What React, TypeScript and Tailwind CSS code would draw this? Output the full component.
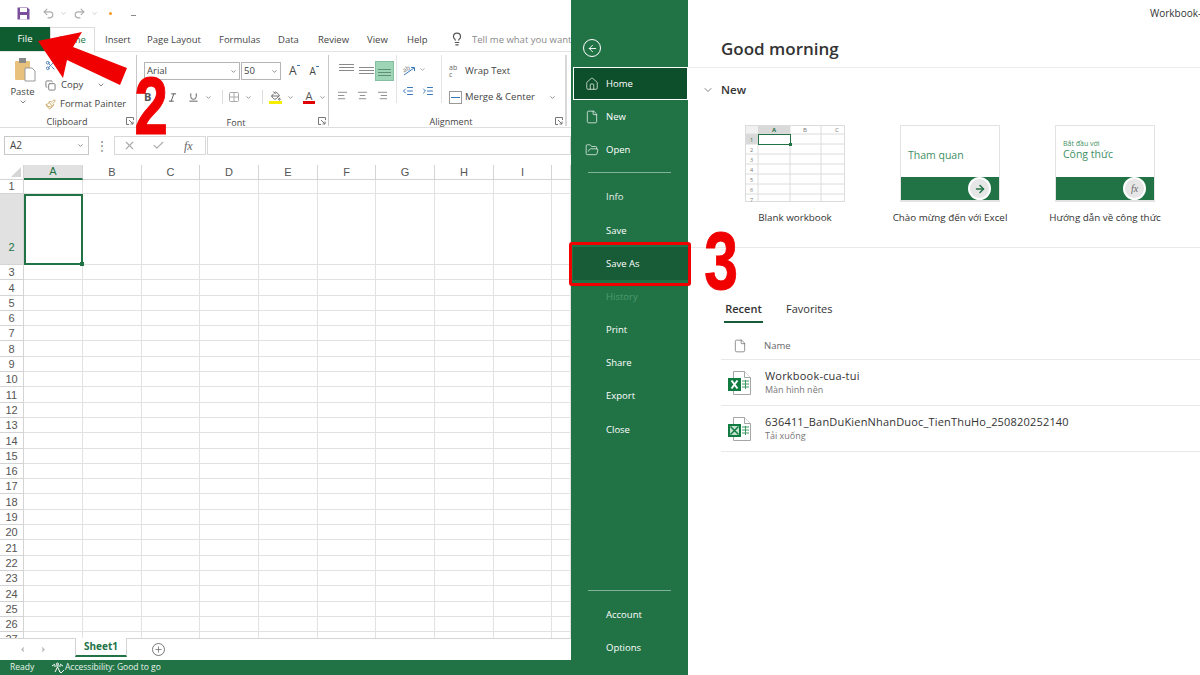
import React from 'react';
import {
  Undo2, Redo2, Lightbulb, ChevronDown, X, Check, ChevronLeft, ChevronRight, Plus, ArrowLeft,
  House, File, FolderOpen, Copy, Scissors, Paintbrush, AlignLeft, AlignCenter, AlignRight,
  IndentDecrease, IndentIncrease, Italic, Underline, Grid2x2, ArrowRight, PaintBucket,
} from 'lucide-react';

const font = "font-['Open_Sans','Noto_Sans',sans-serif]";
const cols = ['A', 'B', 'C', 'D', 'E', 'F', 'G', 'H', 'I', ''];
const rows = Array.from({length: 27}, (_, i) => i + 1);
const tabs = ['Insert', 'Page Layout', 'Formulas', 'Data', 'Review', 'View', 'Help'];
const tabGaps = ['w-[42px]', 'w-[72px]', 'w-[59px]', 'w-[40px]', 'w-[49px]', 'w-[40px]', 'w-[42px]'];

const DialogMark = () => (
  <svg width="8" height="8" viewBox="0 0 8 8" className="absolute right-[2px] bottom-[1px]" fill="none" stroke="#777" strokeWidth="1">
    <path d="M7.5 3V.5H.5v7H3M3 3l4 4M7 4.5V7H4.5" />
  </svg>
);

const Lines = ({active, offset}: {active?: boolean; offset: string}) => (
  <div className={`w-[19px] h-[20px] flex flex-col gap-[2px] px-[2px] ${offset} ${active ? 'bg-[#9fd5b7] border border-[#86bfa0]' : ''}`}>
    <div className={`h-px ${active ? 'bg-[#5f8f75]' : 'bg-[#8a8a8a]'}`} />
    <div className={`h-px ${active ? 'bg-[#5f8f75]' : 'bg-[#8a8a8a]'}`} />
    <div className={`h-px ${active ? 'bg-[#5f8f75]' : 'bg-[#8a8a8a]'}`} />
  </div>
);

const ExcelIcon = ({grid}: {grid?: boolean}) => (
  <svg width="26" height="26" viewBox="0 0 26 26" className="shrink-0">
    <path d="M6.5 1.5h11l6 6v17h-17z" fill="#fff" stroke="#a6a6a6" />
    <path d="M17.5 1.5v6h6" fill="#fff" stroke="#a6a6a6" />
    <path d="M15 11h7M15 14h7M15 17h7M18.5 10v9" stroke="#3d9a62" strokeWidth="1" />
    <rect x="1" y="8" width="13" height="13" fill="#107c41" />
    {grid ? (
      <>
        <rect x="3" y="10" width="9" height="9" fill="#c8e3d2" />
        <path d="M3.5 10.5l8 8M11.5 10.5l-8 8" stroke="#107c41" strokeWidth="1.5" />
      </>
    ) : (
      <path d="M4.5 10.5l6 8M10.5 10.5l-6 8" stroke="#fff" strokeWidth="2" />
    )}
  </svg>
);

const BlankThumb = () => (
  <svg width="100" height="77" viewBox="0 0 100 77" className="bg-white">
    <rect x="0" y="0" width="13" height="9" fill="#f1f1f1" />
    <rect x="13" y="0" width="32" height="9" fill="#d9d9d9" />
    <rect x="0" y="9" width="13" height="10" fill="#d9d9d9" />
    <path d="M.5 0v77M13 9v68M45 0v77M76 0v77M99.5 0v77M0 19h100M0 29h100M0 39h100M0 49h100M0 59h100M0 69h100M0 9h100M0 .5h100M0 76.5h100" stroke="#dcdcdc" strokeWidth="1" fill="none" />
    <rect x="13.5" y="9.5" width="32" height="10" fill="#fff" stroke="#217346" strokeWidth="1" />
    <rect x="44" y="18" width="3" height="3" fill="#217346" />
    <text x="29" y="7" fontSize="6" fontWeight="700" textAnchor="middle" fill="#217346">A</text>
    <text x="60" y="7" fontSize="6" textAnchor="middle" fill="#777">B</text>
    <text x="92" y="7" fontSize="6" textAnchor="middle" fill="#777">C</text>
    {[1, 2, 3, 4, 5, 6, 7].map((n, i) => (
      <text key={n} x="6.5" y={16.5 + i * 10} fontSize="5.5" textAnchor="middle" fill={i === 0 ? '#217346' : '#777'}>{n}</text>
    ))}
  </svg>
);

const Thumb = ({children, badge}: {children: React.ReactNode; badge: React.ReactNode}) => (
  <div className="relative w-[100px] h-[77px] border border-[#e3e3e3] border-b-2 flex flex-col bg-white">
    <div className="flex-1 px-[7px]">{children}</div>
    <div className="h-[23px] bg-[#217346]" />
    <div className="absolute right-[8px] bottom-[0px] w-[23px] h-[23px] rounded-full bg-[#e6e6e6] border-2 border-white flex items-center justify-center">{badge}</div>
  </div>
);

const Side = ({label, icon, cls}: {label: string; icon?: React.ReactNode; cls?: string}) => (
  <div className={`h-[33.2px] flex items-center text-[9.5px] pl-[33px] pt-[1px] relative shrink-0 ${cls ?? 'text-white'}`}>
    {icon && <span className="absolute left-[12px]">{icon}</span>}
    {label}
  </div>
);

export default function App() {
  return (
    <div className={`relative w-[1200px] h-[675px] overflow-hidden flex bg-white text-[#444] ${font}`}>
      {/* excel window behind the backstage */}
      <div className="w-[571px] h-full flex flex-col shrink-0">
        <div className="h-[27px] flex items-center pl-[17px] gap-[2px] shrink-0">
          <svg width="13" height="13" viewBox="0 0 13 13" className="mr-[10px]">
            <path d="M.5.5h10l2 2v10H.5z" fill="#7a4f9e" />
            <rect x="3" y="1" width="7" height="4" fill="#fff" />
            <rect x="3" y="8" width="7" height="4.5" fill="#fff" />
          </svg>
          <Undo2 size={13} className="text-[#aaa]" />
          <ChevronDown size={7} className="text-[#aaa] mr-[4px] ml-[3px]" />
          <Redo2 size={13} className="text-[#aaa]" />
          <ChevronDown size={7} className="text-[#aaa] ml-[3px]" />
          <div className="w-[3px] h-[3px] rounded-full bg-[#f59a23] ml-[9px]" />
          <div className="w-[5px] h-[5px] border-b border-[#888] ml-[17px]" />
        </div>

        <div className="h-[25px] flex items-stretch text-[9.5px] border-b border-[#e4e4e4] shrink-0">
          <div className="w-[50px] shrink-0 bg-[#0f5c30] text-white flex items-center justify-center">File</div>
          <div className="w-[45px] shrink-0 border-x border-t border-[#dcdcdc] -mb-px bg-white text-[#217346] flex items-center justify-center">Home</div>
          <div className="w-[10px] shrink-0" />
          {tabs.map((t, i) => (
            <div key={t} className={`${tabGaps[i]} shrink-0 flex items-center pt-[2px]`}>{t}</div>
          ))}
          <Lightbulb size={14} className="self-center ml-[1px] mr-[8px] shrink-0 text-[#555]" />
          <div className="flex items-center text-[#8a8a8a] whitespace-nowrap pt-[2px]">Tell me what you want</div>
        </div>

        <div className="h-[76px] flex border-b border-[#dedede] shrink-0">
          <div className="relative w-[137px] border-r border-[#c8c8c8] mt-[3px] mb-[1px]">
            <div className="flex h-[61px]">
              <div className="w-[45px] flex flex-col items-center pt-[2px] text-[9.5px]">
                <svg width="24" height="26" viewBox="0 0 24 26" className="ml-[4px]">
                  <rect x="2" y="4" width="15" height="19" rx="1" fill="#e8c27c" />
                  <rect x="6" y="1" width="7" height="5" fill="#8a8a8a" />
                  <path d="M12 11h7l3 3v10H12z" fill="#fff" stroke="#999" />
                </svg>
                <span className="mt-[3px] leading-[12px]">Paste</span>
                <ChevronDown size={8} />
              </div>
              <div className="flex flex-col text-[9.5px] pt-[1px] gap-[0.5px]">
                <div className="h-[19px] flex items-center"><Scissors size={11} className="text-[#4a7fb5]" /></div>
                <div className="h-[19px] flex items-center gap-[5px]"><Copy size={11} className="text-[#777]" />Copy<ChevronDown size={8} className="ml-[9px]" /></div>
                <div className="h-[19px] flex items-center gap-[4px]"><Paintbrush size={11} className="text-[#c9a35f]" />Format Painter</div>
              </div>
            </div>
            <div className="text-[9px] text-center pr-[2px] leading-[12px]">Clipboard</div>
            <DialogMark />
          </div>

          <div className="relative w-[192px] border-r border-[#c8c8c8] mt-[3px] mb-[1px] pl-[7px]">
            <div className="flex items-center h-[22px] mt-[5px] gap-[1px]">
              <div className="w-[96px] h-[18px] border border-[#b5b5b5] flex items-center justify-between px-[2px] text-[9.5px]">Arial<ChevronDown size={7} /></div>
              <div className="w-[40px] h-[18px] border border-[#b5b5b5] flex items-center justify-between px-[2px] text-[9.5px]">50<ChevronDown size={7} /></div>
              <span className="ml-[7px] text-[12px] leading-none relative">A<span className="absolute -right-[3px] top-0 w-[3px] h-px bg-[#3a78b8]" /></span>
              <span className="ml-[12px] text-[10px] leading-none relative">A<span className="absolute -right-[3px] top-0 w-[3px] h-px bg-[#3a78b8]" /></span>
            </div>
            <div className="flex items-center h-[24px] mt-[3px] text-[#555]">
              <span className="w-[12px] text-[11px] font-bold">B</span>
              <Italic size={11} className="ml-[11px]" />
              <Underline size={11} className="ml-[10px]" />
              <ChevronDown size={7} className="ml-[6px]" />
              <div className="w-px h-[14px] bg-[#ddd] ml-[10px]" />
              <Grid2x2 size={12} className="text-[#aaa] ml-[5px]" />
              <ChevronDown size={7} className="ml-[5px]" />
              <div className="w-px h-[14px] bg-[#ddd] ml-[10px]" />
              <div className="flex flex-col items-center w-[13px] ml-[6px]">
                <PaintBucket size={10} />
                <div className="w-[13px] h-[3px] bg-[#f5ee00]" />
              </div>
              <ChevronDown size={7} className="ml-[5px]" />
              <div className="flex flex-col items-center w-[12px] ml-[9px]">
                <span className="text-[11px] leading-[10px]">A</span>
                <div className="w-[12px] h-[3px] bg-[#e00000]" />
              </div>
              <ChevronDown size={7} className="ml-[4px]" />
            </div>
            <div className="text-[9px] text-center leading-[12px] mt-[8px]">Font</div>
            <DialogMark />
          </div>

          <div className="relative w-[238px] border-r-2 border-[#d8d8d8] mt-[3px] mb-[1px] pl-[8px]">
            <div className="flex h-[48px]">
              <div className="w-[60px] flex flex-col gap-[8px] pt-[6px] text-[#888] border-r border-[#e4e4e4]">
                <div className="flex gap-[1px] h-[21px]">
                  <Lines offset="pt-[3px]" />
                  <Lines offset="pt-[6px]" />
                  <Lines active offset="pt-[7px] -ml-[2px]" />
                </div>
                <div className="flex gap-[9px]">
                  <AlignLeft size={11} />
                  <AlignCenter size={11} />
                  <AlignRight size={11} />
                </div>
              </div>
              <div className="w-[45px] flex flex-col gap-[9px] pt-[8px] pl-[5px] border-r border-[#e4e4e4] text-[#777]">
                <div className="flex items-center gap-[3px] h-[13px]">
                  <svg width="14" height="13" viewBox="0 0 14 13" fill="none" stroke="#777" strokeWidth="1" className="overflow-visible">
                    <text x="1" y="8" fontSize="6.5" fill="#777" stroke="none" transform="rotate(-30 5 7)">ab</text>
                    <path d="M2 12l10-7M9 4.5h3.5V8" stroke="#3a78b8" />
                  </svg>
                  <ChevronDown size={7} />
                </div>
                <div className="flex gap-[8px]">
                  <IndentDecrease size={12} className="text-[#3a78b8]" />
                  <IndentIncrease size={12} className="text-[#3a78b8]" />
                </div>
              </div>
              <div className="flex flex-col text-[9.5px] pt-[9px] gap-[12px] pl-[7px]">
                <div className="flex items-center gap-[3px] h-[14px]"><span className="w-[13px] text-[7px] leading-[7px] text-[#666]">ab c</span>Wrap Text</div>
                <div className="flex items-center gap-[3px] h-[14px]">
                  <div className="w-[13px] h-[13px] border border-[#999] flex items-center justify-center"><div className="w-[9px] h-px bg-[#3a78b8]" /></div>
                  Merge &amp; Center<ChevronDown size={7} className="ml-[11px]" />
                </div>
              </div>
            </div>
            <div className="text-[9px] text-center leading-[12px] mt-[13px]">Alignment</div>
            <DialogMark />
          </div>
        </div>

        <div className="h-[37px] flex items-center pl-[4px] pb-[2px] shrink-0 text-[10px]">
          <div className="w-[85px] h-[19px] border border-[#c8c8c8] flex items-center justify-between pl-[5px] pr-[4px]">A2<ChevronDown size={7} /></div>
          <div className="w-[25px] text-center text-[#888] text-[12px] leading-none">⋮</div>
          <div className="w-[92px] h-[19px] border border-[#d8d8d8] flex items-center text-[#aaa]">
            <X size={13} className="ml-[8px]" />
            <Check size={13} className="ml-[16px]" />
            <span className="ml-[19px] italic font-['Liberation_Serif',serif] text-[12px] text-[#666]">fx</span>
          </div>
          <div className="flex-1 h-[19px] border border-[#d8d8d8] ml-px" />
        </div>

        {/* sheet */}
        <div className="flex-1 min-h-0 overflow-hidden grid grid-cols-[24px_59px_59px_58px_59px_59px_58px_59px_59px_58px_19px] content-start text-[11px] text-[#555] font-['Liberation_Sans',sans-serif]">
          <div className="h-[15px] border-b border-r border-[#d4d4d4] relative overflow-hidden">
            <div className="absolute right-[2px] bottom-[2px] w-0 h-0 border-l-[10px] border-l-transparent border-b-[10px] border-b-[#d6d6d6]" />
          </div>
          {cols.map((c) => (
            <div key={c} className={`h-[15px] flex items-center justify-center border-r border-[#d4d4d4] ${c === 'A' ? 'bg-[#e1e1e1] text-[#217346] border-b-2 border-b-[#217346]' : 'border-b border-b-[#d4d4d4]'}`}>{c}</div>
          ))}
          {rows.map((r) => (
            <React.Fragment key={r}>
              <div className={`flex items-end justify-center border-b border-r border-[#d4d4d4] leading-[14px] ${r === 1 ? 'h-[14px]' : r === 2 ? 'h-[71px] bg-[#e1e1e1] text-[#217346] pb-[10px]' : 'h-[15.3px]'}`}>{r}</div>
              {cols.map((c) => (
                <div key={c} className={`relative ${r === 2 && c === 'A' ? 'border-2 border-[#217346] z-10' : 'border-b border-r border-[#e2e2e2]'} ${r === 1 ? 'h-[14px]' : r === 2 ? 'h-[71px]' : 'h-[15.3px]'}`}>
                  {r === 2 && c === 'A' && <div className="absolute -right-[3px] -bottom-[3px] w-[4px] h-[4px] bg-[#217346]" />}
                </div>
              ))}
            </React.Fragment>
          ))}
        </div>

        <div className="h-[22px] flex items-center border-t border-[#d4d4d4] shrink-0 bg-white">
          <ChevronLeft size={9} className="ml-[18px] text-[#bbb] fill-[#bbb]" />
          <ChevronRight size={9} className="ml-[12px] text-[#bbb] fill-[#bbb]" />
          <div className="ml-[27px] w-[52px] h-[19px] -mt-px self-start bg-white border-x border-[#d4d4d4] border-b-2 border-b-[#217346] text-[#217346] font-bold text-[10px] flex items-center justify-center">Sheet1</div>
          <div className="ml-[25px] w-[13px] h-[13px] rounded-full border border-[#777] flex items-center justify-center text-[#666]"><Plus size={9} /></div>
        </div>
        <div className="h-[15px] bg-[#217346] text-[#e9f3ec] text-[8.5px] flex items-center pl-[10px] shrink-0">
          <span className="w-[41px]">Ready</span>
          <svg width="14" height="12" viewBox="0 0 14 12" fill="none" stroke="#fff" strokeWidth="1">
            <circle cx="6.5" cy="2" r="1" />
            <path d="M1 4l3-2M12 4L9 2M3 4h7M4 10l2.5-5L9 10M8 9l2 2 3-3" />
          </svg>
          <span>Accessibility: Good to go</span>
        </div>
      </div>

      {/* backstage nav */}
      <div className="w-[117px] h-full bg-[#217346] flex flex-col shrink-0 pl-[2px]">
        <div className="h-[67px] pt-[39px] pl-[10px] shrink-0">
          <div className="w-[18px] h-[18px] rounded-full border border-white flex items-center justify-center"><ArrowLeft size={11} className="text-white" /></div>
        </div>
        <div className="h-[33px] border border-white bg-[#0e4f2b] flex items-center text-[9.5px] text-white pl-[32px] pt-px relative shrink-0">
          <House size={14} className="absolute left-[11px]" strokeWidth={1.2} />Home
        </div>
        <Side label="New" icon={<File size={14} strokeWidth={1.2} />} />
        <Side label="Open" icon={<FolderOpen size={14} strokeWidth={1.2} />} />
        <div className="h-px bg-[#7fb296] ml-[15px] mr-[17px] my-[6px] shrink-0" />
        <Side label="Info" cls="text-[#e4f0e9] mt-[1px]" />
        <Side label="Save" />
        <Side label="Save As" cls="text-white bg-[#185c37]" />
        <Side label="History" cls="text-[#4e9a70]" />
        <Side label="Print" />
        <Side label="Share" />
        <Side label="Export" />
        <Side label="Close" />
        <div className="mt-auto h-px bg-[#7fb296] ml-[15px] mr-[17px] mb-[7px] shrink-0" />
        <Side label="Account" />
        <div className="mb-[11px]"><Side label="Options" /></div>
      </div>

      {/* backstage content */}
      <div className="flex-1 min-w-0 flex flex-col text-[#333]">
        <div className="h-[26px] text-[10px] whitespace-nowrap pt-[6px] pl-[462px] shrink-0">Workbook-</div>
        <div className="h-[42px] border-b border-[#ececec] pl-[33px] text-[17px] font-semibold leading-[46px] shrink-0">Good morning</div>
        <div className="h-[44px] flex items-center pl-[14px] gap-[7px] text-[11.5px] font-semibold shrink-0">
          <ChevronDown size={12} strokeWidth={1.2} />New
        </div>
        <div className="h-[136px] border-b border-[#e8e8e8] flex pl-[57px] gap-[55px] shrink-0 pt-[13px]">
          <div className="w-[100px] flex flex-col items-center">
            <BlankThumb />
            <div className="text-[9.8px] whitespace-nowrap mt-[9px]">Blank workbook</div>
          </div>
          <div className="w-[100px] flex flex-col items-center">
            <Thumb badge={<ArrowRight size={12} strokeWidth={3} className="text-[#217346]" />}>
              <div className="pt-[24px] text-[10.5px] leading-none text-[#3f8f64]">Tham quan</div>
            </Thumb>
            <div className="text-[9.8px] whitespace-nowrap mt-[9px]">Chào mừng đến với Excel</div>
          </div>
          <div className="w-[100px] flex flex-col items-center">
            <Thumb badge={<span className="italic font-['Liberation_Serif',serif] text-[10px] text-[#666]">fx</span>}>
              <div className="pt-[13px] text-[7px] leading-[9px] text-[#3f8f64]">Bắt đầu với</div>
              <div className="text-[10.5px] leading-[12px] text-[#3f8f64]">Công thức</div>
            </Thumb>
            <div className="text-[9.8px] whitespace-nowrap mt-[9px]">Hướng dẫn về công thức</div>
          </div>
        </div>
        <div className="flex pl-[37px] mt-[52px] pt-px text-[11px] h-[23px] shrink-0">
          <div className="w-[39px] text-center font-semibold border-b-2 border-[#185c37] -ml-[1px]">Recent</div>
          <div className="ml-[23px]">Favorites</div>
        </div>
        <div className="ml-[33px] h-[37px] border-b border-[#e8e8e8] flex items-center pt-[10px] text-[9.5px] text-[#666] shrink-0">
          <File size={14} strokeWidth={1.2} className="ml-[12px] mr-[17px]" />Name
        </div>
        <div className="ml-[33px] h-[46px] border-b border-[#e8e8e8] flex items-center pl-[6px] gap-[12px] shrink-0">
          <ExcelIcon />
          <div className="-mt-px">
            <div className="text-[11px] leading-[15px] tracking-[0.2px]">Workbook-cua-tui</div>
            <div className="text-[9px] leading-[13px] text-[#777]">Màn hình nền</div>
          </div>
        </div>
        <div className="ml-[33px] h-[46px] border-b border-[#e8e8e8] flex items-center pl-[6px] gap-[12px] shrink-0">
          <ExcelIcon grid />
          <div className="-mt-px">
            <div className="text-[11px] leading-[15px] tracking-[0.18px]">636411_BanDuKienNhanDuoc_TienThuHo_250820252140</div>
            <div className="text-[9px] leading-[13px] text-[#777]">Tải xuống</div>
          </div>
        </div>
      </div>

      {/* tutorial marks on top */}
      <svg className="absolute left-0 top-0 pointer-events-none" width="140" height="100" viewBox="0 0 140 100">
        <path d="M38 41L82 32L73 47L127 68L120 85L67 60L63 78Z" fill="#f00000" />
      </svg>
      <div className="absolute left-[129px] top-[66px] w-[40px] h-[80px] text-center text-[#f00000] font-['Liberation_Sans',sans-serif] font-bold text-[82px] leading-[80px] scale-x-[.74] [-webkit-text-stroke:1px_#f00000]">2</div>
      <div className="absolute left-[699px] top-[221px] w-[40px] h-[80px] text-center text-[#f00000] font-['Liberation_Sans',sans-serif] font-bold text-[82px] leading-[80px] scale-x-[.74] [-webkit-text-stroke:1px_#f00000]">3</div>
      <div className="absolute left-[569px] top-[242px] w-[122px] h-[44px] border-[3px] border-[#f00000] rounded-[3px]" />
    </div>
  );
}
